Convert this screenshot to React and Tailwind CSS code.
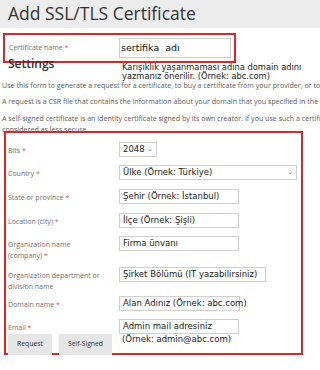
const Label = ({ children, req = true }) => (
  <div className="w-[111px] shrink-0 text-[7px] leading-[11px] text-[#707070]">
    {children}
    {req && <span className="text-[#d9534f]"> *</span>}
  </div>
);

const Field = ({ w, children, select }) => (
  <div
    className={`h-[15px] ${w} border border-[#cfcfcf] bg-white flex items-center pl-[3px] pr-[3px] text-[8.5px] text-[#222] whitespace-nowrap`}
    style={{ fontFamily: '"DejaVu Sans", Verdana, sans-serif' }}
  >
    <span className="flex-1">{children}</span>
    {select && <span className="text-[7px] text-[#777]">⌄</span>}
  </div>
);

const Row = ({ label, req, children, h = "h-[23px]" }) => (
  <div className={`flex ${h}`}>
    <div className="pt-[3px]">
      <Label req={req}>{label}</Label>
    </div>
    <div>{children}</div>
  </div>
);

export default function App() {
  return (
    <div
      className="w-[320px] h-[370px] overflow-hidden bg-white"
      style={{ fontFamily: '"Open Sans", sans-serif' }}
    >
      <div className="h-[28px] bg-[#ececec] pl-[8px]">
        <h1 className="text-[17.5px] leading-[24px] text-[#333] pt-[1px]">
          Add SSL/TLS Certificate
        </h1>
      </div>

      <div className="mt-[5px] ml-[3px] w-[233px] h-[30px] border-2 border-[#e0242c] flex items-center">
        <div className="pl-[4px] w-[114px] text-[7px] text-[#707070]">
          Certificate name <span className="text-[#d9534f]">*</span>
        </div>
        <div
          className="h-[20px] w-[112px] border border-[#cfcfcf] pl-[1px] flex items-center text-[9.5px] text-[#111]"
          style={{ fontFamily: '"DejaVu Sans", Verdana, sans-serif' }}
        >
          sertifika&nbsp; adı
        </div>
      </div>

      <div className="flex -mt-[7px]">
        <h2 className="pl-[8px] w-[122px] text-[12px] leading-[15px] font-semibold text-[#333]">
          Settings
        </h2>
        <div
          className="pt-[7px] text-[8.3px] leading-[9px] text-[#222]"
          style={{ fontFamily: '"DejaVu Sans", Verdana, sans-serif' }}
        >
          Karışıklık yaşanmaması adına domain adını
          <br />
          yazmanız önerilir. (Örnek: abc.com)
        </div>
      </div>

      <div className="pl-[2px] text-[7.1px] leading-[11px] text-[#5a5a5a] whitespace-nowrap">
        <p className="-mt-[1px]">
          Use this form to generate a request for a certificate, to buy a certificate from your provider, or to create a self-signed certificate.
        </p>
        <p className="mt-[5px]">
          A request is a CSR file that contains the information about your domain that you specified in the form.
        </p>
        <p className="mt-[6px]">
          A self-signed certificate is an identity certificate signed by its own creator. If you use such a certificate,
        </p>
        <p>considered as less secure.</p>
      </div>

      <div className="-mt-[4px] ml-[4px] w-[299px] h-[224px] border-2 border-[#e0242c] pl-[2px] pt-[9px]">
        <Row label="Bits">
          <Field w="w-[38px]" select>2048</Field>
        </Row>
        <Row label="Country" h="h-[24px]">
          <Field w="w-[178px]" select>Ülke (Örnek: Türkiye)</Field>
        </Row>
        <Row label="State or province" h="h-[24px]">
          <Field w="w-[120px]">Şehir (Örnek: İstanbul)</Field>
        </Row>
        <Row label="Location (city)">
          <Field w="w-[120px]">İlçe (Örnek: Şişli)</Field>
        </Row>
        <Row
          h="h-[31px]"
          label={
            <>
              Organization name
              <br />
              (company)
            </>
          }
        >
          <Field w="w-[120px]">Firma ünvanı</Field>
        </Row>
        <Row
          h="h-[29px]"
          req={false}
          label={
            <>
              Organization department or
              <br />
              division name
            </>
          }
        >
          <Field w="w-[147px]">Şirket Bölümü (IT yazabilirsiniz)</Field>
        </Row>
        <Row label="Domain name">
          <Field w="w-[121px]">Alan Adınız (Örnek: abc.com)</Field>
        </Row>
        <div className="flex">
          <div className="w-[111px] shrink-0">
            <div className="pt-[3px]">
              <Label>Email</Label>
            </div>
            <div className="flex gap-[7px] mt-[1px]">
              <button className="w-[44px] h-[21px] bg-[#e6e6e6] text-[6.8px] text-[#333]">
                Request
              </button>
              <button className="w-[53px] h-[21px] bg-[#e6e6e6] text-[6.8px] text-[#333]">
                Self-Signed
              </button>
            </div>
          </div>
          <div>
            <Field w="w-[120px]">Admin mail adresiniz</Field>
            <div
              className="pl-[3px] text-[8.5px] leading-[10px] text-[#222]"
              style={{ fontFamily: '"DejaVu Sans", Verdana, sans-serif' }}
            >
              (Örnek: admin@abc.com)
            </div>
          </div>
        </div>
      </div>
    </div>
  );
}
